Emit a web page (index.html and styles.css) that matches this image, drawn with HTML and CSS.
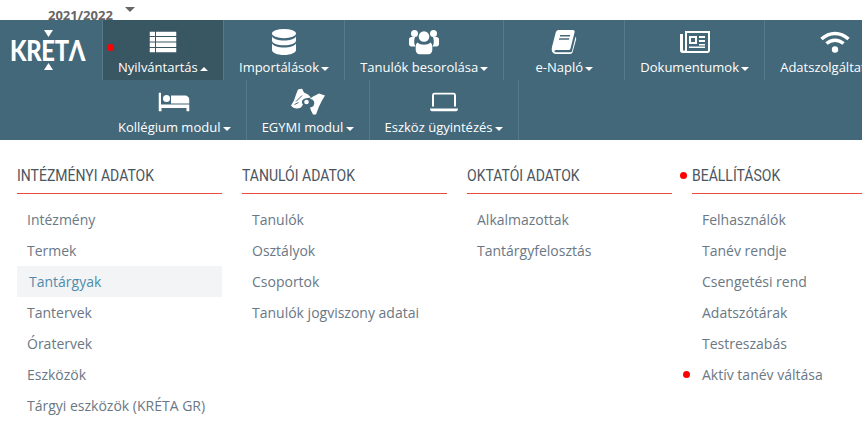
FILE: index.html
```html
<!DOCTYPE html>
<html lang="hu">
<head>
<meta charset="utf-8">
<title>KRÉTA</title>
<link rel="stylesheet" href="styles.css">
</head>
<body>
<div class="topbar"><span class="year">2021/2022</span><span class="year-caret"></span></div>
<nav class="nav">
  <div class="row">
    <a class="logo">
      <svg class="logo-tri logo-tri-top" viewBox="0 0 9 7"><path d="M0 0h9L4.500 7z"/></svg>
      <span class="logo-text">KRETΛ</span>
      <svg class="logo-tri logo-tri-bottom" viewBox="0 0 9 7"><path d="M4.500 0L9 7H0z"/></svg>
    </a>
    <a class="item active">
      <span class="dot dot-nav"></span>
      <svg class="icon" width="27" height="21" viewBox="0 0 27 21"><path d="M0 0h5.500v4.500H0zM6.500 0H27v4.500H6.500zM0 5.500h5.500V10H0zM6.500 5.500H27V10H6.500zM0 11h5.500v4.500H0zM6.500 11H27v4.500H6.500zM0 16.500h5.500V21H0zM6.500 16.500H27V21H6.500z"/></svg>
      <span class="label">Nyilvántartás<i class="caret up"></i></span>
    </a>
    <a class="item">
      <svg class="icon" width="24" height="26" viewBox="0 0 24 26"><ellipse cx="12" cy="4.600" rx="12" ry="4.600"/><path d="M0 7.500c1.500 2.700 6.500 4 12 4s10.500-1.300 12-4v4c0 2.800-5.300 4.800-12 4.800S0 14.300 0 11.500zM0 14.500c1.500 2.700 6.500 4 12 4s10.500-1.300 12-4v6.500c0 2.800-5.300 5-12 5S0 23.800 0 21z"/></svg>
      <span class="label">Importálások<i class="caret"></i></span>
    </a>
    <a class="item">
      <svg class="icon" width="30" height="25" viewBox="0 0 30 25"><circle cx="5.500" cy="4" r="3.500"/><circle cx="24.500" cy="4" r="3.500"/><path d="M0 10c0-1.500 1-2.500 2.500-2.500h3.700c-.7 1-1 2.600-1 4.500 0 2 .5 3.700 1.500 5H2.500C1 17 0 16 0 14.500zM30 10c0-1.500-1-2.500-2.500-2.500h-3.700c.7 1 1 2.600 1 4.500 0 2-.5 3.700-1.500 5h4.200c1.500 0 2.500-1 2.500-2.500z"/><circle cx="15" cy="7" r="5.300"/><path d="M8.500 13c1.500 1.500 3.800 2.200 6.500 2.200s5-.7 6.500-2.200c1.200.8 1.800 2.500 1.800 5v2.500c0 2.500-2 4.500-4.500 4.500h-7.600c-2.500 0-4.500-2-4.500-4.500V18c0-2.500.6-4.200 1.800-5z"/></svg>
      <span class="label">Tanulók besorolása<i class="caret"></i></span>
    </a>
    <a class="item">
      <svg class="icon" width="25" height="24" viewBox="0 0 25 24"><path fill-rule="evenodd" d="M7 0h14.500c1.300 0 2 1 1.600 2.300L19 18.500c-.3 1-1 1.500-2 1.500H4.500c-1.200 0-1.800.8-1.500 1.500.2.500.7.800 1.500.800h14.700c.6 0 1-.3 1.200-.8L24 7c.6.300 1 1 .8 1.800l-3.600 13c-.3 1.300-1.200 2.200-2.500 2.200H4.500C2.300 24 .3 22.300 0 20c-.1-.5 0-1 .1-1.500L4.300 2.300C4.700 1 5.700 0 7 0zM8.700 5l-.4 1.500h10l.4-1.500zM7.800 8.200l-.4 1.500h10l.4-1.500z"/></svg>
      <span class="label">e-Napló<i class="caret"></i></span>
    </a>
    <a class="item">
      <svg class="icon" width="30" height="22" viewBox="0 0 30 22"><path fill-rule="evenodd" d="M5 0h25v19.500c0 1.400-1.100 2.500-2.500 2.500H2.500C1.100 22 0 20.900 0 19.500V3h3v16.500h2zM7 2v17.500c0 .5-.1.800-.3.500h20.800c.3 0 .5-.2.500-.5V2z"/><path fill-rule="evenodd" d="M9 5h8v8H9zM11 7v4h4V7zM19 5h6v2h-6zM19 9h6v2h-6zM19 13h6v1.500h-6zM9 15.500h16V17H9z"/></svg>
      <span class="label">Dokumentumok<i class="caret"></i></span>
    </a>
    <a class="item">
      <svg class="icon icon-line" width="30" height="22" viewBox="0 0 30 22"><path d="M1.500 8C9.500 .5 20.500 .5 28.500 8M6.500 12.500C11.500 8 18.500 8 23.500 12.500"/><circle class="fill" cx="15" cy="18.500" r="3.200"/></svg>
      <span class="label">Adatszolgáltatás<i class="caret"></i></span>
    </a>
  </div>
  <div class="row row-second">
    <a class="item">
      <svg class="icon" width="31" height="19" viewBox="0 0 31 19"><path d="M0 0h2.500v12H31v7h-3v-3.500H3V19H0z"/><circle cx="8" cy="6" r="3.500"/><path d="M12.500 3H26c3 0 5 2 5 5v3H12.500z"/></svg>
      <span class="label">Kollégium modul<i class="caret"></i></span>
    </a>
    <a class="item">
      <svg class="icon" width="34" height="27" viewBox="0 0 34 27"><path d="M7 1l4-1 2 4 4 2 3 3-6 1c-3 1-4 4-2 6l-2 3c-4 2-8 1-10-2l3-5 2-6z"/><path d="M22 8l6-3 6 2-3 5-3 6-3 8h-3l-2-4-1-3c3 0 5-3 4-6-1-2-3-3-5-2z"/><circle cx="15.500" cy="13.500" r="2.300"/><path class="cut" d="M5 13l6-6M3.500 16l4-2"/></svg>
      <span class="label">EGYMI modul<i class="caret"></i></span>
    </a>
    <a class="item">
      <svg class="icon" width="28" height="19" viewBox="0 0 28 19"><path fill-rule="evenodd" d="M5 0h18c1.700 0 3 1.300 3 3v11h-2V3c0-.6-.4-1-1-1H5c-.6 0-1 .4-1 1v11H2V3c0-1.700 1.300-3 3-3z"/><path d="M0 16h28c0 1.700-1 3-2.500 3h-23C1 19 0 17.700 0 16z"/></svg>
      <span class="label">Eszköz ügyintézés<i class="caret"></i></span>
    </a>
  </div>
</nav>
<main class="columns">
  <section class="column">
    <h2 class="heading"><span class="heading-text">INTÉZMÉNYI ADATOK</span></h2>
    <ul class="links">
      <li class="link">Intézmény</li>
      <li class="link">Termek</li>
      <li class="link current">Tantárgyak</li>
      <li class="link">Tantervek</li>
      <li class="link">Óratervek</li>
      <li class="link">Eszközök</li>
      <li class="link">Tárgyi eszközök (KRÉTA GR)</li>
    </ul>
  </section>
  <section class="column">
    <h2 class="heading"><span class="heading-text">TANULÓI ADATOK</span></h2>
    <ul class="links">
      <li class="link">Tanulók</li>
      <li class="link">Osztályok</li>
      <li class="link">Csoportok</li>
      <li class="link">Tanulók jogviszony adatai</li>
    </ul>
  </section>
  <section class="column">
    <h2 class="heading"><span class="heading-text">OKTATÓI ADATOK</span></h2>
    <ul class="links">
      <li class="link">Alkalmazottak</li>
      <li class="link">Tantárgyfelosztás</li>
    </ul>
  </section>
  <section class="column">
    <h2 class="heading heading-gap"><span class="dot dot-heading"></span><span class="heading-text">BEÁLLÍTÁSOK</span></h2>
    <ul class="links">
      <li class="link">Felhasználók</li>
      <li class="link">Tanév rendje</li>
      <li class="link">Csengetési rend</li>
      <li class="link">Adatszótárak</li>
      <li class="link">Testreszabás</li>
      <li class="link"><span class="dot dot-link"></span>Aktív tanév váltása</li>
    </ul>
  </section>
</main>
</body>
</html>
```

FILE: styles.css
```css
* { box-sizing: border-box; }
html, body { margin: 0; padding: 0; }
body {
  width: 862px;
  height: 434px;
  overflow: hidden;
  background: #fff;
  font-family: "Open Sans", sans-serif;
}
.topbar {
  height: 20px;
  padding-left: 48px;
  display: flex;
  align-items: flex-start;
  overflow: hidden;
}
.year {
  font-size: 13px;
  font-weight: 700;
  line-height: 14px;
  margin-top: 8px;
  color: #666;
}
.year-caret {
  margin: 7px 0 0 12px;
  border-left: 5px solid transparent;
  border-right: 5px solid transparent;
  border-top: 5px solid #666;
}
.nav {
  height: 120px;
  background: #43687a;
  color: #fff;
}
.row {
  display: flex;
  height: 60px;
}
.row-second { padding-left: 103px; }
.logo {
  position: relative;
  flex: none;
  width: 103px;
  border-right: 1px solid #557a8b;
  display: flex;
  align-items: center;
  padding-left: 10px;
}
.logo-text {
  font-family: Lato, sans-serif;
  font-weight: 900;
  font-size: 28px;
  line-height: 1;
  letter-spacing: -.4px;
  transform: scaleX(.85);
  transform-origin: left center;
}
.logo-tri {
  position: absolute;
  left: 44px;
  width: 9px;
  height: 7px;
  fill: #fff;
}
.logo-tri-top { top: 10px; }
.logo-tri-bottom { top: 43px; }
.item {
  position: relative;
  flex: none;
  min-width: 121px;
  padding: 0 15px;
  border-right: 1px solid #557a8b;
  display: flex;
  flex-direction: column;
  align-items: center;
  justify-content: flex-end;
}
.item.active { background: #395663; }
.icon {
  position: absolute;
  top: 22px;
  left: 50%;
  transform: translate(-50%, -50%);
  fill: #fff;
}
.icon .cut {
  fill: none;
  stroke: #43687a;
  stroke-width: 1;
}
.icon-line {
  fill: none;
  stroke: #fff;
  stroke-width: 3.500;
}
.icon-line .fill { fill: #fff; stroke: none; }
.label {
  white-space: nowrap;
  font-size: 13px;
  line-height: 18px;
  margin-bottom: 4px;
}
.caret {
  display: inline-block;
  vertical-align: middle;
  margin-left: 2.200px;
  border-left: 4px solid transparent;
  border-right: 4px solid transparent;
  border-top: 4px solid #fff;
}
.caret.up {
  border-top: 0;
  border-bottom: 4px solid #fff;
}
.dot {
  position: absolute;
  width: 7px;
  height: 7px;
  border-radius: 50%;
  background: #f00;
}
.dot-nav { left: 4px; top: 24px; }
.dot-heading { left: -12px; top: 12px; }
.dot-link { left: -9px; top: 12px; }
.columns {
  display: flex;
  gap: 20px;
  padding: 20px 0 0 17px;
}
.column {
  flex: none;
  width: 205px;
}
.heading {
  position: relative;
  margin: 0 0 10px;
  height: 34px;
  border-bottom: 1px solid #e74c3c;
  font-family: "Roboto", sans-serif;
  font-size: 16px;
  font-weight: 400;
  line-height: 31px;
  color: #4a5560;
}
.heading-text {
  display: inline-block;
  white-space: nowrap;
  transform: scaleX(.875);
  transform-origin: left center;
}
.links {
  list-style: none;
  margin: 0;
  padding: 0;
}
.link {
  position: relative;
  height: 31px;
  padding-left: 10px;
  font-size: 14px;
  line-height: 31px;
  color: #6a7885;
}
.link.current {
  background: #f3f4f6;
  padding-left: 12px;
  color: #4f8cab;
}
```
